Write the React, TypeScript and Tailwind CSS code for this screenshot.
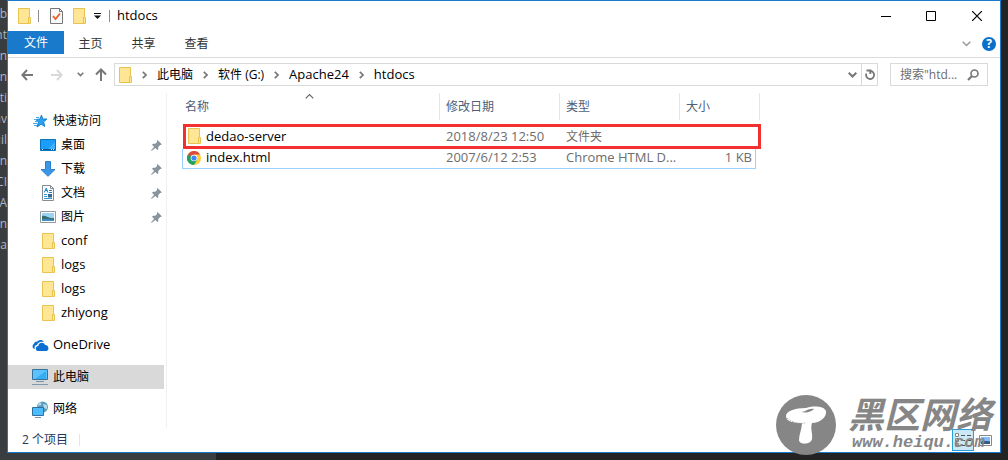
import React from 'react'

const DARK_LINES = ['ub', 'nt', 'in', 'n', 'ti', 'av', 'uil', 'on', 'CI', 'EA', 'in ', 'na']

const PINNED = [
    { name: '桌面', icon: <DesktopIcon /> },
    { name: '下载', icon: <DownloadIcon /> },
    { name: '文档', icon: <DocumentIcon /> },
    { name: '图片', icon: <PictureIcon /> },
]

const FOLDERS = ['conf', 'logs', 'logs', 'zhiyong']

const CRUMBS = ['此电脑', '软件 (G:)', 'Apache24', 'htdocs']

function FolderIcon() {
    return (
        <svg width="13" height="16" viewBox="0 0 13 16" className="shrink-0">
            <path d="M.5.5h11v15H.5z" fill="#ffe694" stroke="#e8c34f" />
            <path d="M10.5 9.5h2v6h-2z" fill="#ffe694" stroke="#e8c34f" />
        </svg>
    )
}

function DesktopIcon() {
    return (
        <svg width="16" height="16" viewBox="0 0 16 16">
            <path d="M.5 2.5h15v11H.5z" fill="#1a9dfb" stroke="#0b72bd" />
            <path d="M8 12L15 5v7z" fill="#3fb0ff" />
            <path d="M1 12.5h14" stroke="#075b9a" />
            <path d="M2 12.5h1m8 0h1m1 0h1" stroke="#cfeaff" />
        </svg>
    )
}

function DownloadIcon() {
    return (
        <svg width="16" height="16" viewBox="0 0 16 16">
            <path d="M5.5.5h5v8h4.500L8 15.300 1 8.500h4.500z" fill="#3b96e8" stroke="#2a7fce" />
        </svg>
    )
}

function DocumentIcon() {
    return (
        <svg width="16" height="16" viewBox="0 0 16 16">
            <path d="M2.500.5h8l3 3v12h-11z" fill="#fff" stroke="#858b90" />
            <path d="M10.500.5v3h3" fill="none" stroke="#858b90" />
            <path d="M4.300 7.500l2-4.500 1.500 4.500M5 5.500h2.500M9 5.500h3M9 7.500h3" fill="none" stroke="#1684cf" />
            <path d="M4 9.500h3M4 11.500h3M4 13.500h8" fill="none" stroke="#2d9be0" />
            <path d="M8 9h4v3.500H8z" fill="#37698a" />
        </svg>
    )
}

function PictureIcon() {
    return (
        <svg width="16" height="16" viewBox="0 0 16 16">
            <path d="M.5 2.500h15v11H.5z" fill="#fff" stroke="#939ba1" />
            <path d="M2 4h12v8H2z" fill="#9bd2f2" />
            <path d="M2 7c4-1 7 3 12 2v3H2z" fill="#356f72" />
            <path d="M2 10.500c4-1 8 0 12 .5v1H2z" fill="#448fc1" />
        </svg>
    )
}

function StarIcon() {
    return (
        <svg width="16" height="16" viewBox="0 0 16 16">
            <path
                d="M9.500 2l1.200 4H15l-3.300 2.800 1 4.700-3.500-2.300L5 14l1.300-4.500L4 6.500l4-.5z"
                fill="#2aa0ef"
                stroke="#1d83cc"
            />
            <path d="M4 4.500h3M2 6.500h3M3 8.500h3M1 10.500h4M2 12.500h3" stroke="#45aaf0" />
        </svg>
    )
}

function PinIcon() {
    return (
        <svg width="11" height="11" viewBox="0 0 11 11">
            <path
                d="M6.500 0l4.300 4.300-.9.8-.8-.1-1.800 2v2.300l-.8.8-2.200-2.100L.5 10.900l-.4-.4L3 6.800 1 4.800l1-1h2.200L6.100 2 6 .8z"
                fill="#87949c"
            />
        </svg>
    )
}

function CloudIcon() {
    return (
        <svg width="17" height="12" viewBox="0 0 17 12">
            <path
                d="M1.500 9.500A3 3 0 012 4.700C2.500 3 4 2.500 5 2.800 6.500.5 10.500 0 12 3 8 2 5.500 4 5 6 2.800 6.300 2 8 3 10z"
                fill="#0a6fd0"
            />
            <path d="M5.500 12C2.800 11 3.500 7 6.300 7 6.500 3.300 12 2.500 13 6c4-.3 4.500 5.500 1.500 6z" fill="#0a6fd0" />
        </svg>
    )
}

function ComputerIcon() {
    return (
        <svg width="16" height="16" viewBox="0 0 16 16">
            <path d="M.5.5h15v10H.5z" fill="#5bc2ff" stroke="#36729c" />
            <path d="M3 10L14 2v8z" fill="#35adf5" />
            <path d="M4 12.500h8" stroke="#7893a5" />
            <path d="M0 15.500h16" stroke="#8099ac" />
        </svg>
    )
}

function NetworkIcon() {
    return (
        <svg width="17" height="17" viewBox="0 0 17 17">
            <circle cx="10.500" cy="6" r="5.500" fill="#5c9dbb" />
            <path d="M7 2c2-1 3 0 2 2L6 5zm4 1l4 1v4l-3-1z" fill="#b7dbe6" />
            <path d="M.5 6.500h11v8H.5z" fill="#4dbcff" stroke="#2f719e" />
            <path d="M3 16.500h6" stroke="#7794a8" />
        </svg>
    )
}

function ChromeIcon() {
    return (
        <svg width="14" height="14" viewBox="0 0 14 14" className="shrink-0">
            <circle cx="7" cy="7" r="7" fill="#fc3" />
            <path d="M7 7L.9 3.500A7 7 0 0113.100 3.500H7z" fill="#dd4b3e" />
            <path d="M.9 3.500A7 7 0 007 14l3.100-5.200L7 7z" fill="#1da261" />
            <path d="M.9 3.500L4 8.800 7 7V3.500z" fill="#dd4b3e" />
            <path d="M.9 3.500L4 8.800 7 10.500 7 7z" fill="#1da261" />
            <circle cx="7" cy="7" r="3.300" fill="#fff" />
            <circle cx="7" cy="7" r="2.600" fill="#4285f4" />
        </svg>
    )
}

function Chevron({ className, weight = 1.5 }: { className?: string; weight?: number }) {
    return (
        <svg width="9" height="6" viewBox="0 0 9 6" fill="none" stroke="currentColor" className={className}>
            <path d="M.7.7l3.800 3.800L8.300.7" strokeWidth={weight} />
        </svg>
    )
}

// Latin names run a size larger than the Chinese ones
function Label({ text }: { text: string }) {
    return <span className={/^[\x00-\x7f]+$/.test(text) ? 'text-[13px]' : 'text-xs'}>{text}</span>
}

function TitleBar() {
    return (
        <div className="flex h-[30px] items-center pl-[10px]">
            <FolderIcon />
            <span className="ml-[7px] h-3 w-px bg-[#8c8c8c]" />
            <button aria-label="属性" className="ml-[11px]">
                <svg width="13" height="16" viewBox="0 0 13 16">
                    <path d="M.5.5h9l3 3v12H.5z" fill="#f7f8fa" stroke="#777" />
                    <path d="M9.500.5v3h3" fill="none" stroke="#777" />
                    <path d="M3 8l2.500 3L10 5.500" fill="none" stroke="#e8602c" strokeWidth="1.800" />
                </svg>
            </button>
            <button aria-label="新建文件夹" className="ml-[10px]">
                <FolderIcon />
            </button>
            <button aria-label="自定义快速访问工具栏" className="ml-2">
                <svg width="7" height="6" viewBox="0 0 7 6">
                    <path d="M0 .5h7" stroke="#111" />
                    <path d="M0 2.500h7L3.500 6z" fill="#111" />
                </svg>
            </button>
            <span className="ml-2 h-3 w-px bg-[#8c8c8c]" />
            <h1 className="ml-[7px] text-[13px]">htdocs</h1>
            <div className="ml-auto flex items-center pr-[18px]">
                <button aria-label="最小化" className="mr-[35px]">
                    <svg width="10" height="11" viewBox="0 0 10 11" stroke="#000">
                        <path d="M0 5.500h10" />
                    </svg>
                </button>
                <button aria-label="最大化" className="mr-[36px]">
                    <svg width="10" height="10" viewBox="0 0 10 10" fill="none" stroke="#000">
                        <path d="M.5.5h9v9h-9z" />
                    </svg>
                </button>
                <button aria-label="关闭">
                    <svg width="10" height="10" viewBox="0 0 10 10" stroke="#000">
                        <path d="M0 0l10 10M10 0L0 10" strokeWidth="1.200" />
                    </svg>
                </button>
            </div>
        </div>
    )
}

function Ribbon() {
    return (
        <div className="flex h-[27px] border-b border-[#dadbdc] text-[#333]">
            <button className="h-[23px] w-14 bg-[#1979ca] text-white">文件</button>
            <button className="w-[53px]">主页</button>
            <button className="w-[53px]">共享</button>
            <button className="w-[53px]">查看</button>
            <div className="ml-auto flex items-center gap-[11px] pr-1">
                <button aria-label="展开功能区" className="text-[#999]">
                    <Chevron />
                </button>
                <button
                    aria-label="帮助"
                    className="size-[14px] rounded-full bg-[#0a70cc] text-[12px] leading-[14px] font-bold text-white"
                >
                    ?
                </button>
            </div>
        </div>
    )
}

function AddressBar() {
    return (
        <div className="mb-[2px] flex h-[33px] items-center pr-3 pl-[13px] text-[#777]">
            <button aria-label="后退">
                <svg width="12" height="12" viewBox="0 0 12 12" fill="none" stroke="currentColor" strokeWidth="2">
                    <path d="M12 6H1.500M6 1L1.400 6 6 11" />
                </svg>
            </button>
            <button aria-label="前进" className="ml-[18px] text-[#d9d9d9]">
                <svg width="12" height="12" viewBox="0 0 12 12" fill="none" stroke="currentColor" strokeWidth="2">
                    <path d="M0 6h10.500M6 1l4.600 5L6 11" />
                </svg>
            </button>
            <button aria-label="最近浏览的位置" className="ml-[14px]">
                <svg width="7" height="5" viewBox="0 0 7 5" fill="none" stroke="currentColor" strokeWidth="1.600">
                    <path d="M.7.7l2.800 2.800L6.300.7" />
                </svg>
            </button>
            <button aria-label="上移" className="ml-[11px]">
                <svg width="12" height="13" viewBox="0 0 12 13" fill="none" stroke="currentColor" strokeWidth="2">
                    <path d="M6 13V1.500M1 6.500l5-5 5 5" />
                </svg>
            </button>
            <div className="ml-[7px] flex h-[23px] flex-1 items-center border border-[#d9d9d9] pl-1">
                <FolderIcon />
                {CRUMBS.map((crumb) => (
                    <React.Fragment key={crumb}>
                        <svg
                            width="5"
                            height="8"
                            viewBox="0 0 5 8"
                            fill="none"
                            stroke="currentColor"
                            strokeWidth="1.700"
                            className="mr-[10px] ml-[10px]"
                        >
                            <path d="M.8.8L4 4 .8 7.200" />
                        </svg>
                        <a href="#" className="text-black">
                            <Label text={crumb} />
                        </a>
                    </React.Fragment>
                ))}
                <button aria-label="以前的位置" className="mr-1 ml-auto">
                    <Chevron weight={2} />
                </button>
                <button aria-label="刷新" className="flex h-full w-4 items-center justify-center border-l border-[#d9d9d9]">
                    <svg width="10" height="11" viewBox="0 0 10 11" fill="none" stroke="currentColor" strokeWidth="1.800">
                        <path d="M8.600 4.500A4 4 0 11 5.200 2" transform="matrix(-1 0 0 1 10 0)" />
                        <path d="M1.500 1.500h3.800v3.500" />
                    </svg>
                </button>
            </div>
            <label className="ml-3 flex h-[23px] w-[98px] items-center border border-[#d9d9d9] pr-2 pl-[9px]">
                <input
                    aria-label="搜索"
                    placeholder={'搜索"htd...'}
                    className="w-0 flex-1 outline-none placeholder:text-[#6d6d6d]"
                />
                <svg width="12" height="12" viewBox="0 0 12 12" fill="none" stroke="currentColor">
                    <circle cx="7.500" cy="4.500" r="3.500" strokeWidth="1.600" />
                    <path d="M5 7L1 11" strokeWidth="2.200" />
                </svg>
            </label>
        </div>
    )
}

function Sidebar() {
    return (
        <nav className="w-[159px] shrink-0 border-r border-[#f0f0f0] pt-4">
            <a href="#" className="flex h-6 items-center gap-[5px] pl-6">
                <StarIcon />
                快速访问
            </a>
            {PINNED.map((item) => (
                <a key={item.name} href="#" className="flex h-6 items-center gap-[5px] pr-1 pl-8">
                    {item.icon}
                    <span className="flex-1">{item.name}</span>
                    <PinIcon />
                </a>
            ))}
            {FOLDERS.map((name, i) => (
                <a key={i} href="#" className="flex h-6 items-center gap-[6px] pl-[34px]">
                    <FolderIcon />
                    <Label text={name} />
                </a>
            ))}
            <a href="#" className="mt-2 flex h-6 items-center gap-1 pl-6">
                <CloudIcon />
                <Label text="OneDrive" />
            </a>
            <a href="#" className="mt-2 mr-[2px] flex h-6 items-center gap-[5px] bg-[#d9d9d9] pl-6">
                <ComputerIcon />
                此电脑
            </a>
            <a href="#" className="mt-2 flex h-6 items-center gap-1 pl-6">
                <NetworkIcon />
                网络
            </a>
        </nav>
    )
}

function FileList() {
    return (
        <main className="min-w-0 flex-1 pl-4">
            <table className="w-[577px] table-fixed border-separate border-spacing-0 text-left">
                <thead className="text-[#4c607a]">
                    <tr className="h-[27px]">
                        <th className="relative w-[257px] border-r border-[#e5e5e5] pl-[2px] font-normal">
                            名称
                            <Chevron weight={1.2} className="absolute top-0 left-[122px] rotate-180 text-[#666]" />
                        </th>
                        <th className="w-[120px] border-r border-[#e5e5e5] pl-[6px] font-normal">修改日期</th>
                        <th className="w-[120px] border-r border-[#e5e5e5] pl-[6px] font-normal">类型</th>
                        <th className="w-[80px] border-r border-[#e5e5e5] pl-[6px] font-normal">大小</th>
                    </tr>
                </thead>
            </table>
            <table className="mt-1 w-[578px] table-fixed border-separate border-spacing-0 text-left text-[#6d6d6d] outline-3 -outline-offset-3 outline-[#f2302f]">
                <tbody>
                    <tr className="h-[25px]">
                        <td className="w-[257px] pl-[5px]">
                            <span className="flex items-center gap-[5px] text-black">
                                <FolderIcon />
                                <Label text="dedao-server" />
                            </span>
                        </td>
                        <td className="w-[120px] pl-[6px] text-[13px]">2018/8/23 12:50</td>
                        <td className="w-[120px] pl-[6px]">文件夹</td>
                        <td />
                    </tr>
                </tbody>
            </table>
            <table className="-ml-px w-[574px] table-fixed border-separate border-spacing-0 border border-t-0 border-[#99d1ff] text-left text-[#6d6d6d]">
                <tbody>
                    <tr className="h-[19px] text-[13px] leading-[17px]">
                        <td className="w-[257px] pb-[2px] pl-1">
                            <span className="flex items-center gap-[5px] text-black">
                                <ChromeIcon />
                                index.html
                            </span>
                        </td>
                        <td className="w-[120px] pb-[2px] pl-[6px]">2007/6/12 2:53</td>
                        <td className="w-[120px] pb-[2px] pl-[6px] whitespace-nowrap">Chrome HTML D...</td>
                        <td className="pr-[3px] pb-[2px] text-right">1 KB</td>
                    </tr>
                </tbody>
            </table>
        </main>
    )
}

function StatusBar() {
    return (
        <footer className="flex h-6 items-center pl-[14px] text-[#1e395b]">
            2 个项目
            <span className="ml-[11px] h-3 w-px bg-[#e5e5e5]" />
            <div className="ml-auto flex h-full items-center gap-[5px] pr-2">
                <button
                    aria-label="详细信息"
                    className="flex h-[22px] w-[22px] items-center justify-center border border-[#26a0da] bg-[#cbe8f6]"
                >
                    <svg width="16" height="14" viewBox="0 0 16 14" fill="none" stroke="#555">
                        <path d="M.5.5h3v3h-3zM.5 5.500h3v3h-3zM.5 10.500h3v3h-3z" fill="#fff" stroke="#888" />
                        <path d="M6 2.500h4m2 0h4M6 7.500h4m2 0h4M6 12.500h4m2 0h4" />
                        <path d="M1.500 12h1" stroke="#d33" />
                    </svg>
                </button>
                <button aria-label="大缩略图">
                    <svg width="13" height="11" viewBox="0 0 13 11">
                        <path d="M.5.5h12v10H.5z" fill="#fff" stroke="#888" />
                        <path d="M2 2h9v7H2z" fill="#80bfff" />
                        <path d="M2 7c3-3 6 0 9-1v3H2z" fill="#2b5d84" />
                    </svg>
                </button>
            </div>
        </footer>
    )
}

function Watermark() {
    return (
        <div className="pointer-events-none absolute right-4 bottom-[5px] flex items-center gap-3 text-[#868686]">
            <svg width="60" height="60" viewBox="0 0 60 60">
                <circle cx="30" cy="30" r="30" fill="#868686" />
                <path
                    d="M10 21c0-5 9-8 20-8 4-2 18-3 20 3 1 6-6 12-14 12-2 6 1 10 0 16-1 6-13 6-13 1 0-6 3-11 3-17C18 28 10 27 10 21z"
                    fill="#fff"
                />
                <path d="M25 17c5 0 7-4 13-3-3 3-7 4-13 3z" fill="#868686" />
                <path d="M11 23c5 4 10 6 18 5" fill="none" stroke="#aaa" strokeDasharray="1 1" />
            </svg>
            <div className="flex flex-col">
                <span className="text-[36px] leading-[36px] font-bold italic">黑区网络</span>
                <span className="pl-1 font-['Liberation_Mono'] text-[17px] leading-[20px] font-bold italic">
                    www.heiqu.com
                </span>
            </div>
        </div>
    )
}

export default function App() {
    return (
        <div className="relative flex min-h-screen bg-[linear-gradient(to_right,#3a3d3f_216px,#232323_216px)] pr-[7px] pb-[7px] font-['Open_Sans','Noto_Sans_CJK_SC',sans-serif] text-xs text-black">
            <div className="w-[7px] shrink-0 overflow-hidden pt-[3px] text-[#a9b7c6]">
                {DARK_LINES.map((line) => (
                    <div key={line} className="flex h-[21px] items-center justify-end">
                        {line}
                    </div>
                ))}
            </div>
            <div className="flex min-w-0 flex-1 flex-col border border-[#1979ca] bg-white">
                <TitleBar />
                <Ribbon />
                <AddressBar />
                <div className="flex flex-1">
                    <Sidebar />
                    <FileList />
                </div>
                <StatusBar />
            </div>
            <Watermark />
        </div>
    )
}
